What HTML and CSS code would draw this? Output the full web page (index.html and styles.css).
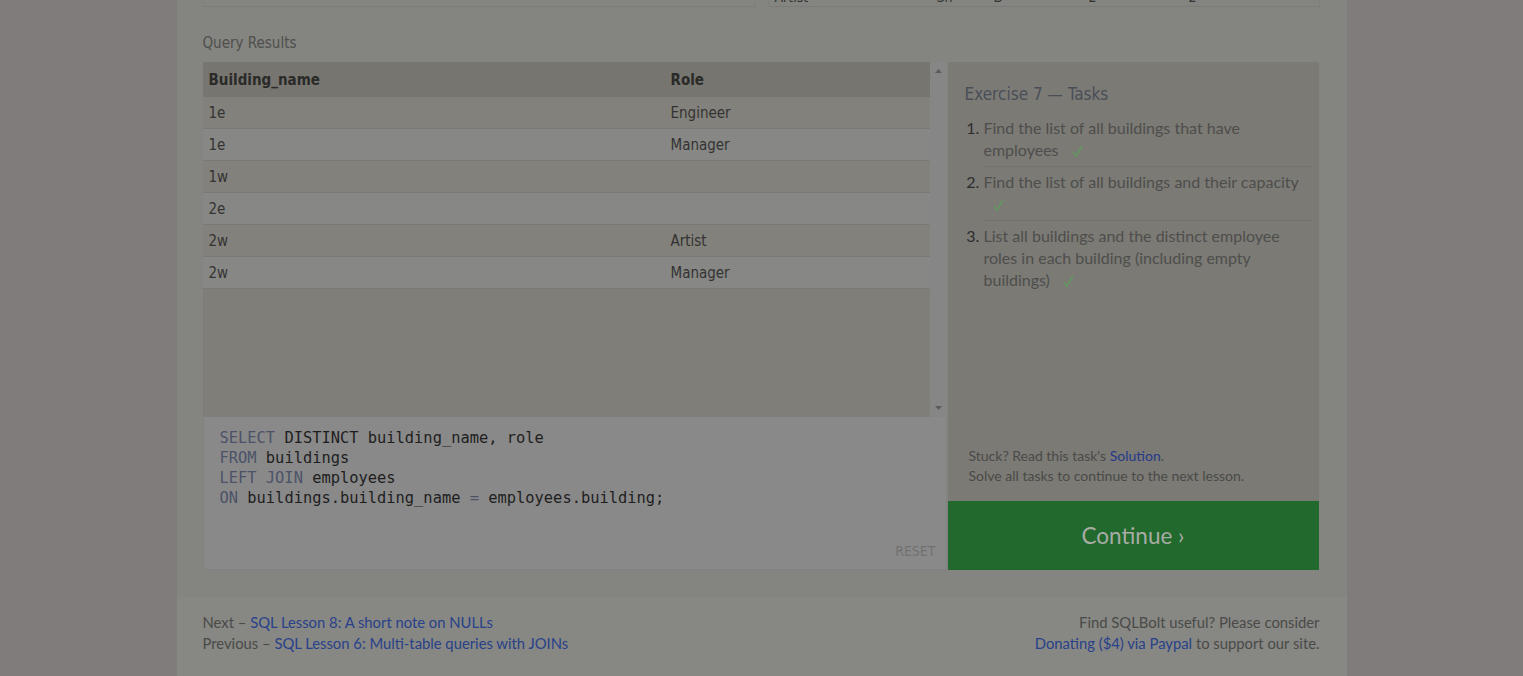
FILE: index.html
```html
<!DOCTYPE html>
<html>
<head>
<meta charset="utf-8">
<link rel="stylesheet" href="styles.css">
</head>
<body>
<div class="page">
  <div class="lesson">
    <div class="prev-tables">
      <div class="prev-box"><div class="prev-row"><span>1</span><span>Chris</span></div></div>
      <div class="prev-box"><div class="prev-row"><span class="c1">Artist</span><span class="c2">Sh</span><span class="c3">D</span><span class="c4">2</span><span class="c5">2</span></div></div>
    </div>
    <div class="results-label">Query Results</div>
    <div class="exercise">
      <div class="work">
        <div class="results">
          <div class="table-wrap">
            <table class="rtable">
              <thead><tr><th class="col1">Building_name</th><th>Role</th></tr></thead>
              <tbody>
                <tr><td>1e</td><td>Engineer</td></tr>
                <tr><td>1e</td><td>Manager</td></tr>
                <tr><td>1w</td><td></td></tr>
                <tr><td>2e</td><td></td></tr>
                <tr><td>2w</td><td>Artist</td></tr>
                <tr><td>2w</td><td>Manager</td></tr>
              </tbody>
            </table>
          </div>
          <div class="scrollbar">
            <svg width="17" height="17" viewBox="0 0 17 17"><path d="M5 11 L8.5 7 L12 11 Z" fill="#5c5c5c"/></svg>
            <svg width="17" height="17" viewBox="0 0 17 17"><path d="M5 6 L8.5 10 L12 6 Z" fill="#5c5c5c"/></svg>
          </div>
        </div>
        <div class="editor">
          <pre class="code"><span class="kw">SELECT</span> DISTINCT building_name, role
<span class="kw">FROM</span> buildings
<span class="kw">LEFT JOIN</span> employees
<span class="kw">ON</span> buildings.building_name <span class="kw">=</span> employees.building;</pre>
          <div class="reset">RESET</div>
        </div>
      </div>
      <div class="side">
        <div class="tasks">
          <div class="tasks-title">Exercise 7 — Tasks</div>
          <ol class="task-list">
            <li>Find the list of all buildings that have employees <svg class="check" width="11" height="12" viewBox="0 0 11 12"><path d="M1 7.2 L4 11 L10 1" fill="none" stroke="#62985f" stroke-width="1.5"/></svg></li>
            <li>Find the list of all buildings and their capacity <svg class="check" width="11" height="12" viewBox="0 0 11 12"><path d="M1 7.2 L4 11 L10 1" fill="none" stroke="#62985f" stroke-width="1.5"/></svg></li>
            <li>List all buildings and the distinct employee roles in each building (including empty buildings) <svg class="check" width="11" height="12" viewBox="0 0 11 12"><path d="M1 7.2 L4 11 L10 1" fill="none" stroke="#62985f" stroke-width="1.5"/></svg></li>
          </ol>
          <div class="hint">
            <div>Stuck? Read this task's <a class="link">Solution</a>.</div>
            <div>Solve all tasks to continue to the next lesson.</div>
          </div>
        </div>
        <div class="continue">Continue ›</div>
      </div>
    </div>
  </div>
  <div class="footer">
    <div class="nav">
      <div>Next – <a class="link">SQL Lesson 8: A short note on NULLs</a></div>
      <div>Previous – <a class="link">SQL Lesson 6: Multi-table queries with JOINs</a></div>
    </div>
    <div class="donate">
      <div>Find SQLBolt useful? Please consider</div>
      <div><a class="link">Donating ($4) via Paypal</a> to support our site.</div>
    </div>
  </div>
</div>
</body>
</html>
```
FILE: styles.css
```css
html, body {
  margin: 0;
  padding: 0;
}
body {
  background: #807c7b;
  font-family: Lato, "Open Sans", sans-serif;
  color: #4a4a48;
  height: 676px;
  overflow: hidden;
}
.page {
  width: 1170px;
  margin: 0 auto;
  background: #848480;
  height: 676px;
}
.lesson {
  padding: 0 27px 27px 26px;
}
.prev-tables {
  display: flex;
  gap: 12px;
  height: 7px;
}
.prev-box {
  width: 552px;
  height: 6px;
  border-bottom: 1px solid #7b7b77;
  border-left: 1px solid #7f7f7b;
  border-right: 1px solid #7f7f7b;
  overflow: hidden;
}
.prev-box + .prev-box {
  width: 551px;
}
.prev-row {
  display: flex;
  margin-top: -11px;
  font-family: "DejaVu Sans Condensed", sans-serif;
  font-size: 14px;
  line-height: 16px;
  color: #333;
  padding-left: 6px;
}
.prev-box:first-child .prev-row { visibility: hidden; }
.c1 { width: 162px; }
.c2 { width: 57px; }
.c3 { width: 95px; }
.c4 { width: 100px; }
.results-label {
  margin-top: 26px;
  font-family: "DejaVu Sans Condensed", sans-serif;
  font-size: 15px;
  line-height: 20px;
  color: #4f4f4d;
}
.exercise {
  display: flex;
  margin-top: 9px;
  height: 508px;
}
.work {
  width: 744px;
  display: flex;
  flex-direction: column;
}
.results {
  height: 355px;
  display: flex;
  background: #7f7e79;
}
.table-wrap {
  flex: 1;
}
.rtable {
  width: 100%;
  border-collapse: collapse;
  font-family: "DejaVu Sans Condensed", sans-serif;
  font-size: 15px;
  color: #333331;
}
.rtable th {
  background: #777570;
  text-align: left;
  font-weight: bold;
  height: 35px;
  padding: 0 6px;
  color: #2a2a28;
}
.rtable th.col1 { width: 450px; }
.rtable td {
  height: 30px;
  padding: 1px 6px 0;
  border-bottom: 1px solid #7a7975;
}
.rtable tbody tr:nth-child(odd) td { background: #82817c; }
.rtable tbody tr:nth-child(even) td { background: #878786; }
.scrollbar {
  width: 17px;
  background: #868686;
  display: flex;
  flex-direction: column;
  justify-content: space-between;
}
.scrollbar svg { display: block; }
.editor {
  flex: 1;
  background: #898989;
  border: 1px solid #828282;
  border-top: none;
  display: flex;
  flex-direction: column;
  justify-content: space-between;
  padding: 11px 10px 10px 16px;
}
.code {
  margin: 0;
  font-family: "DejaVu Sans Mono", "Liberation Mono", monospace;
  font-size: 15.4px;
  line-height: 20px;
  color: #1e1e1e;
}
.code .kw { color: #4c5268; }
.reset {
  align-self: flex-end;
  font-family: "DejaVu Sans Condensed", sans-serif;
  font-size: 14px;
  color: #717170;
}
.side {
  width: 371px;
  margin-left: 1px;
  display: flex;
  flex-direction: column;
}
.tasks {
  flex: 1;
  background: #7b7a75;
  padding: 21px 7px 15px 17px;
  display: flex;
  flex-direction: column;
}
.tasks-title {
  font-family: "DejaVu Sans Condensed", sans-serif;
  font-size: 17px;
  line-height: 22px;
  color: #4a4e58;
}
.task-list {
  margin: 12px 0 0 0;
  padding-left: 19px;
  font-size: 16px;
  line-height: 22px;
  color: #4e4e4c;
}
.task-list li {
  padding: 0 0 5px 0;
  margin-bottom: 4px;
  border-bottom: 1px solid #72716d;
}
.task-list li:last-child { border-bottom: none; }
.task-list li::marker { color: #2e2e2e; }
.check {
  margin-left: 9px;
  vertical-align: -1px;
}
.hint {
  margin-top: auto;
  padding-left: 4px;
  font-size: 14px;
  line-height: 20px;
  color: #4a4a48;
}
.link {
  color: #26398a;
  text-decoration: none;
}
.continue {
  height: 69px;
  background: #21692c;
  color: #a8aca6;
  font-size: 22.5px;
  display: flex;
  align-items: center;
  justify-content: center;
}
.footer {
  background: #878783;
  display: flex;
  justify-content: space-between;
  padding: 15px 27px 0 26px;
  height: 64px;
  font-size: 14.8px;
  line-height: 21px;
  color: #4a4a48;
}
.donate {
  text-align: right;
}
.footer .link { color: #28418a; }
```
